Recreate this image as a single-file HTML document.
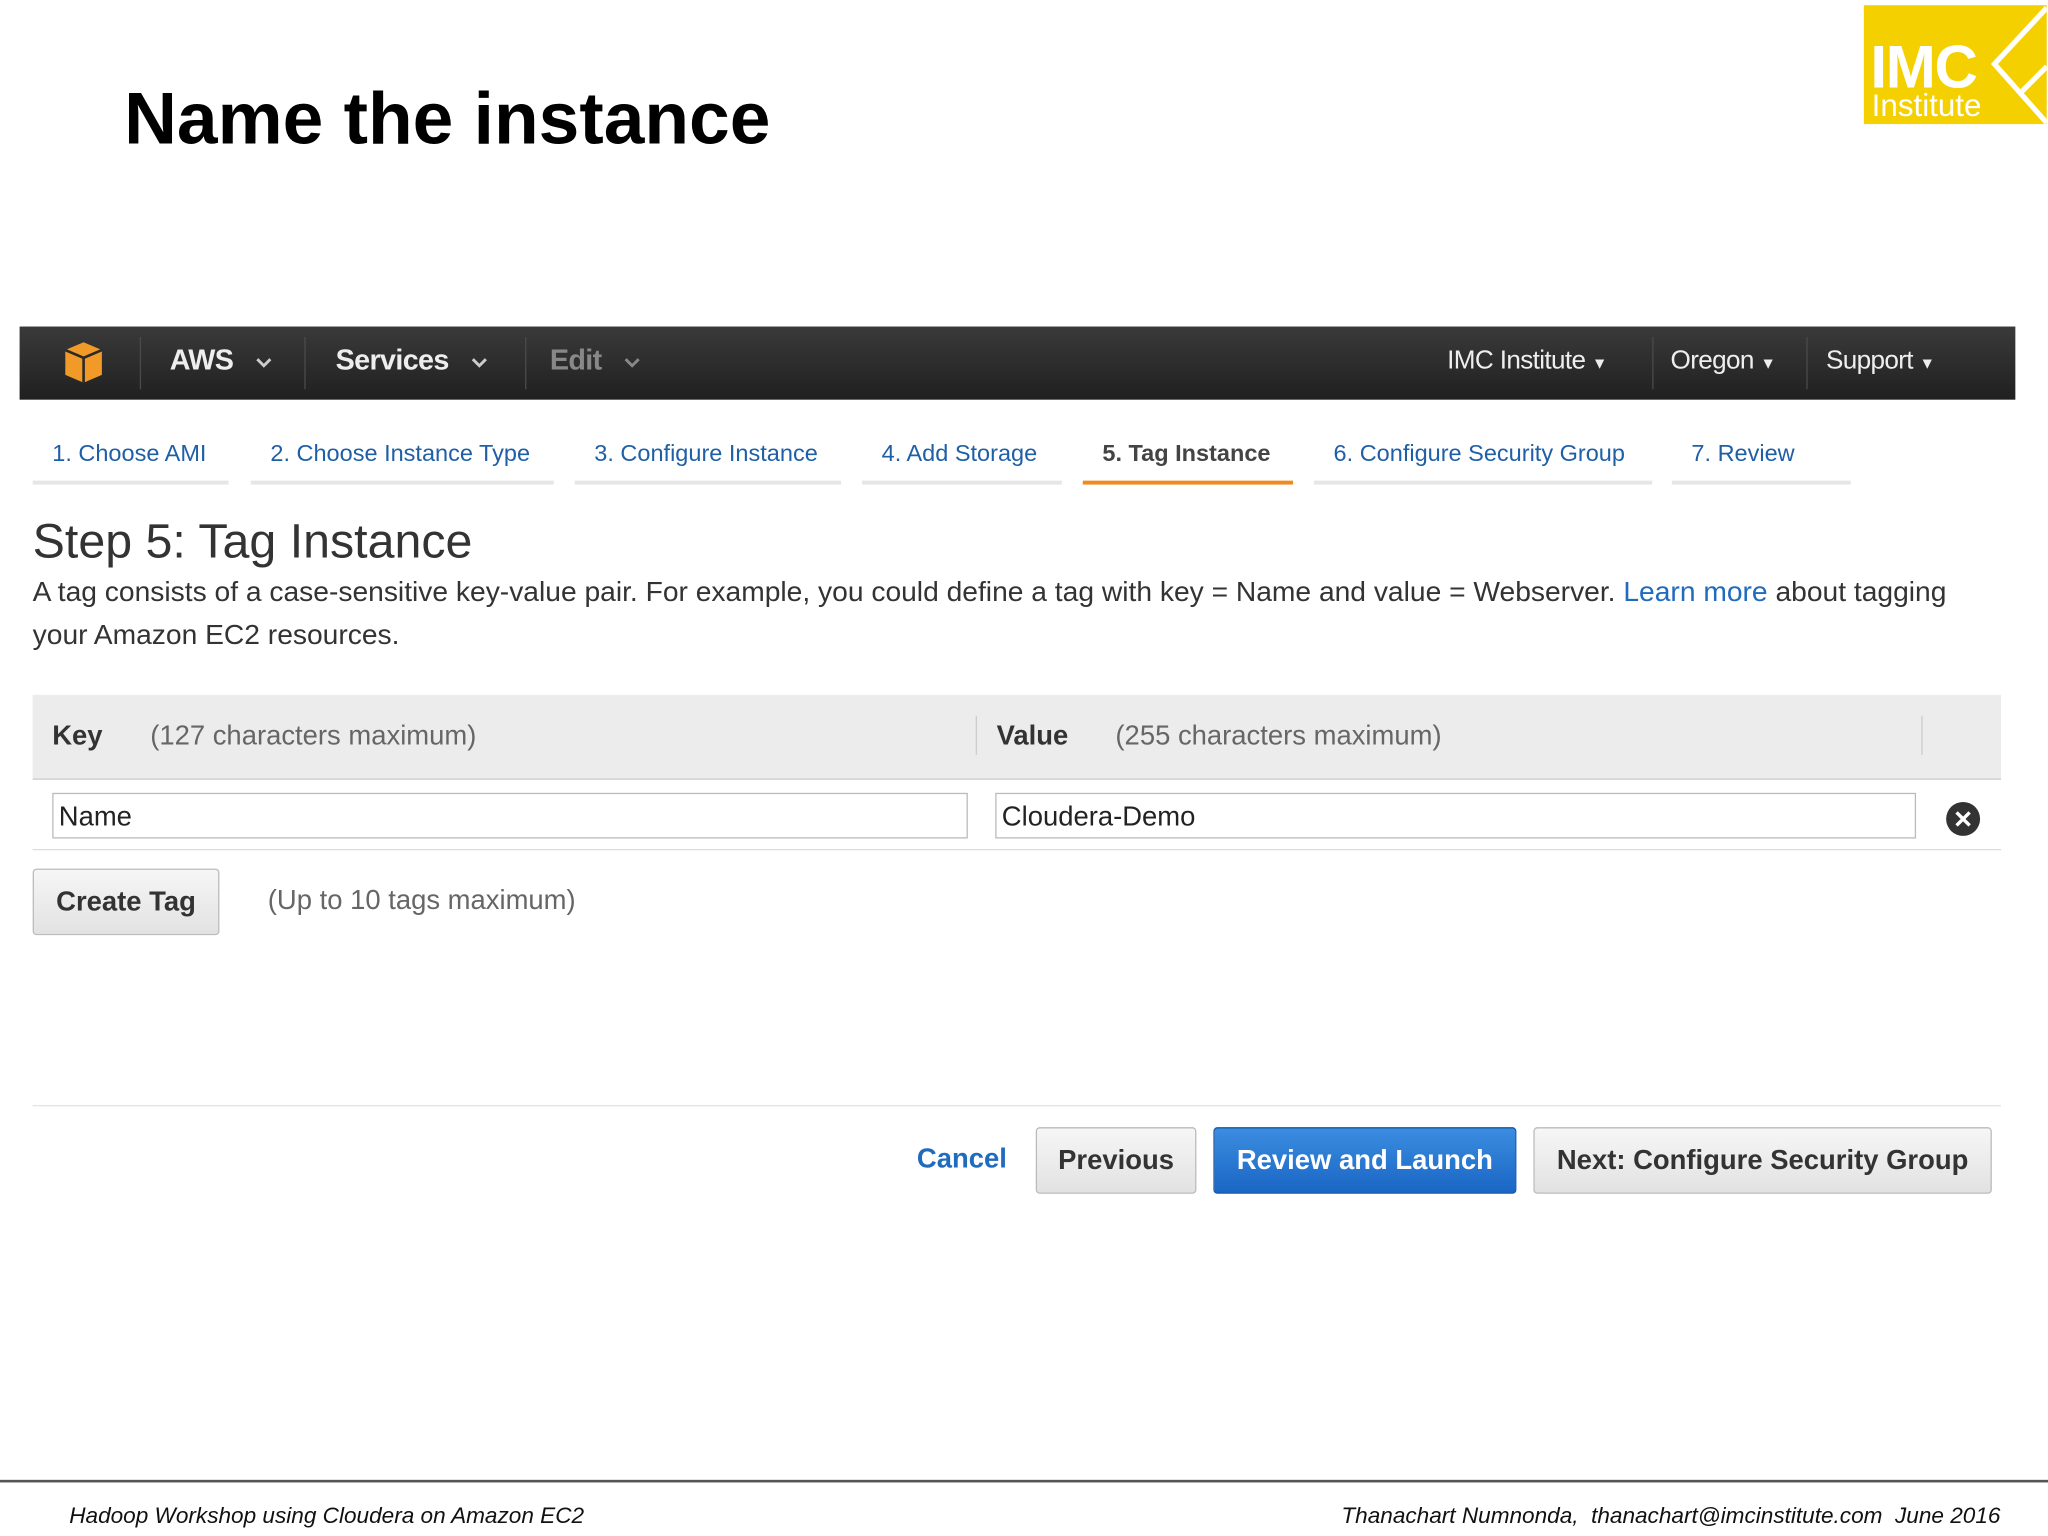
<!DOCTYPE html>
<html><head><meta charset="utf-8"><style>
html,body{margin:0;padding:0;background:#fff;overflow:hidden}
body{width:2048px;height:1536px}
#w{position:absolute;left:0;top:0;width:1568px;height:1176px;transform:scale(1.306122);transform-origin:0 0;font-family:"Liberation Sans",Arial,sans-serif;color:#222}
.a{position:absolute;white-space:nowrap}
.nav{position:absolute;left:15px;top:250px;width:1528px;height:56px;background:linear-gradient(#3a3a3a,#202020);}
.nv{position:absolute;top:0;height:56px;line-height:52px;color:#eee;font-weight:bold;font-size:22px;letter-spacing:-0.5px}
.sep{position:absolute;top:8px;width:1px;height:40px;background:#4a4a4a}
.tab{position:absolute;top:337px;font-size:18px;color:#1f5fa6}
.ul{position:absolute;top:368px;height:3px;background:#e6e6e6}
.btn{position:absolute;border:1px solid #bbb;border-radius:3px;background:linear-gradient(#f6f6f6,#e2e2e2);font-weight:bold;font-size:21px;color:#333;text-align:center}
.chev{display:inline-block;vertical-align:middle;margin-left:16px}
</style></head><body><div id="w">
<div class="a" style="left:95px;top:58px;font-size:56px;font-weight:bold;color:#000">Name the instance</div>
<div class="a" style="left:1427px;top:4px;width:140px;height:91px;background:#f5d000;overflow:hidden">
 <div class="a" style="left:5px;top:20px;color:#fff;font-weight:bold;font-size:46px;letter-spacing:-1px">IMC</div>
 <div class="a" style="left:6px;top:64px;color:#fff;font-size:24px">Institute</div>
 <svg class="a" style="left:0;top:0" width="140" height="91"><polyline points="140,2 100,45 140,90" fill="none" stroke="#fff" stroke-width="4"/><line x1="120" y1="67" x2="140" y2="47" stroke="#fff" stroke-width="4"/></svg>
</div>
<div class="nav">
 <svg class="a" style="left:33px;top:10px" width="32" height="34"><path d="M16 2 L30 8 L30 27 L16 33 L2 27 L2 8Z" fill="#f29a27"/><path d="M2 8 L16 14 L30 8 M16 14 L16 33" stroke="#2a2a2a" stroke-width="2" fill="none"/></svg>
 <div class="sep" style="left:92px"></div>
 <div class="nv" style="left:115px">AWS<svg class="chev" width="14" height="9"><path d="M2 2L7 7L12 2" stroke="#ccc" stroke-width="2.2" fill="none"/></svg></div>
 <div class="sep" style="left:218px"></div>
 <div class="nv" style="left:242px">Services<svg class="chev" width="14" height="9"><path d="M2 2L7 7L12 2" stroke="#ccc" stroke-width="2.2" fill="none"/></svg></div>
 <div class="sep" style="left:387px"></div>
 <div class="nv" style="left:406px;color:#888">Edit<svg class="chev" width="14" height="9"><path d="M2 2L7 7L12 2" stroke="#888" stroke-width="2.2" fill="none"/></svg></div>
 <div class="nv" style="left:1093px;font-weight:normal;font-size:20px">IMC Institute <span style="font-size:12px">&#9660;</span></div>
 <div class="sep" style="left:1250px"></div>
 <div class="nv" style="left:1264px;font-weight:normal;font-size:20px">Oregon <span style="font-size:12px">&#9660;</span></div>
 <div class="sep" style="left:1368px"></div>
 <div class="nv" style="left:1383px;font-weight:normal;font-size:20px">Support <span style="font-size:12px">&#9660;</span></div>
</div>
<div class="tab" style="left:40px">1. Choose AMI</div><div class="ul" style="left:25px;width:150px"></div>
<div class="tab" style="left:207px">2. Choose Instance Type</div><div class="ul" style="left:192px;width:232px"></div>
<div class="tab" style="left:455px">3. Configure Instance</div><div class="ul" style="left:440px;width:204px"></div>
<div class="tab" style="left:675px">4. Add Storage</div><div class="ul" style="left:660px;width:153px"></div>
<div class="tab" style="left:844px;color:#444;font-weight:bold">5. Tag Instance</div><div class="ul" style="left:829px;width:161px;background:#f0891f"></div>
<div class="tab" style="left:1021px">6. Configure Security Group</div><div class="ul" style="left:1006px;width:259px"></div>
<div class="tab" style="left:1295px">7. Review</div><div class="ul" style="left:1280px;width:137px"></div>
<div class="a" style="left:25px;top:394px;font-size:37px;color:#333">Step 5: Tag Instance</div>
<div class="a" style="left:25px;top:436px;font-size:21.6px;line-height:33px;color:#333">A tag consists of a case-sensitive key-value pair. For example, you could define a tag with key = Name and value = Webserver. <span style="color:#1f6bbd">Learn more</span> about tagging<br>your Amazon EC2 resources.</div>
<div class="a" style="left:25px;top:532px;width:1507px;height:64px;background:#ececec;border-bottom:1px solid #ccc"></div>
<div class="sep" style="left:747px;top:548px;height:30px;background:#ccc"></div>
<div class="sep" style="left:1471px;top:548px;height:30px;background:#ccc"></div>
<div class="a" style="left:40px;top:552px;font-size:21px;font-weight:bold;color:#333">Key</div>
<div class="a" style="left:115px;top:552px;font-size:21px;color:#666">(127 characters maximum)</div>
<div class="a" style="left:763px;top:552px;font-size:21px;font-weight:bold;color:#333">Value</div>
<div class="a" style="left:854px;top:552px;font-size:21px;color:#666">(255 characters maximum)</div>
<div class="a" style="left:40px;top:607px;width:699px;height:33px;border:1px solid #bbb;font-size:21px;line-height:35px;text-indent:4px;color:#222">Name</div>
<div class="a" style="left:762px;top:607px;width:703px;height:33px;border:1px solid #bbb;font-size:21px;line-height:35px;text-indent:4px;color:#222">Cloudera-Demo</div>
<svg class="a" style="left:1489px;top:613px" width="28" height="28"><circle cx="14" cy="14" r="13" fill="#333"/><path d="M9 9L19 19M19 9L9 19" stroke="#fff" stroke-width="2.6"/></svg>
<div class="a" style="left:25px;top:650px;width:1507px;height:1px;background:#ddd"></div>
<div class="btn" style="left:25px;top:665px;width:141px;height:49px;line-height:49px">Create Tag</div>
<div class="a" style="left:205px;top:678px;font-size:21px;color:#666">(Up to 10 tags maximum)</div>
<div class="a" style="left:25px;top:846px;width:1507px;height:1px;background:#e3e3e3"></div>
<div class="a" style="left:702px;top:876px;font-size:21px;font-weight:bold;color:#1f6bbd">Cancel</div>
<div class="btn" style="left:793px;top:863px;width:121px;height:49px;line-height:49px">Previous</div>
<div class="btn" style="left:929px;top:863px;width:230px;height:49px;line-height:49px;background:linear-gradient(#3b8de0,#1a66c4);border-color:#1458a8;color:#fff">Review and Launch</div>
<div class="btn" style="left:1174px;top:863px;width:349px;height:49px;line-height:49px">Next: Configure Security Group</div>
<div class="a" style="left:0;top:1133px;width:1568px;height:2px;background:#555"></div>
<div class="a" style="left:53px;top:1150px;font-size:17.3px;font-style:italic;color:#111">Hadoop Workshop using Cloudera on Amazon EC2</div>
<div class="a" style="left:1027px;top:1150px;font-size:17.3px;font-style:italic;color:#111">Thanachart Numnonda,&nbsp; thanachart@imcinstitute.com&nbsp; June 2016</div>
</div></body></html>
